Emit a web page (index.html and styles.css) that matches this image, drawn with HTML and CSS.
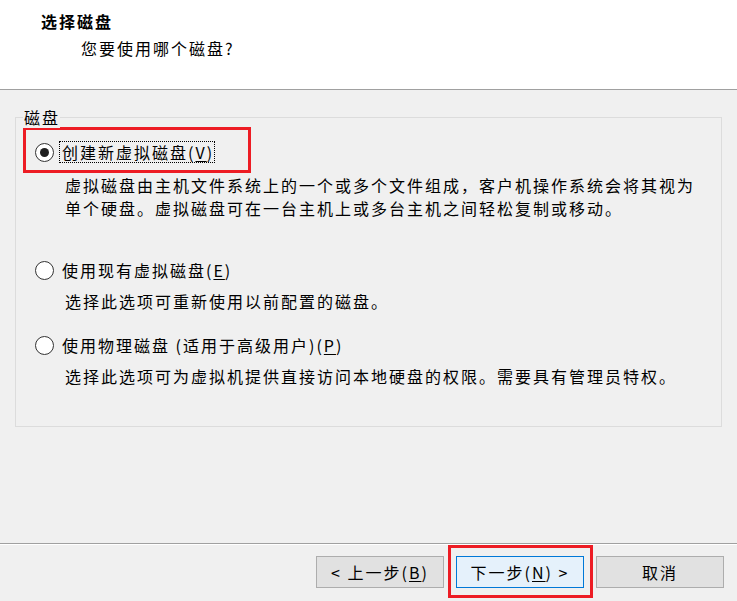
FILE: index.html
```html
<!DOCTYPE html>
<html lang="zh-CN">
<head>
<meta charset="utf-8">
<title>选择磁盘</title>
<link rel="stylesheet" href="styles.css">
</head>
<body>
<div class="dialog">
  <header class="header">
    <div class="title">选择磁盘</div>
    <div class="subtitle">您要使用哪个磁盘?</div>
  </header>
  <main class="main">
    <section class="group">
      <span class="legend">磁盘</span>
      <div class="highlight">
        <div class="option">
          <span class="radio checked"></span>
          <span class="label focused">创建新虚拟磁盘(<u>V</u>)</span>
        </div>
      </div>
      <p class="desc desc-1">虚拟磁盘由主机文件系统上的一个或多个文件组成，客户机操作系统会将其视为<br>单个硬盘。虚拟磁盘可在一台主机上或多台主机之间轻松复制或移动。</p>
      <div class="option option-2">
        <span class="radio"></span>
        <span class="label">使用现有虚拟磁盘(<u>E</u>)</span>
      </div>
      <p class="desc desc-2">选择此选项可重新使用以前配置的磁盘。</p>
      <div class="option option-3">
        <span class="radio"></span>
        <span class="label">使用物理磁盘 (适用于高级用户)(<u>P</u>)</span>
      </div>
      <p class="desc desc-3">选择此选项可为虚拟机提供直接访问本地硬盘的权限。需要具有管理员特权。</p>
    </section>
  </main>
  <footer class="footer">
    <button class="btn btn-back">&lt; 上一步(<u>B</u>)</button>
    <div class="highlight-btn">
      <button class="btn btn-next">下一步(<u>N</u>) &gt;</button>
    </div>
    <button class="btn btn-cancel">取消</button>
  </footer>
</div>
</body>
</html>
```
FILE: styles.css
```css
* {
  box-sizing: border-box;
  margin: 0;
  padding: 0;
}

html, body {
  width: 737px;
  height: 601px;
  overflow: hidden;
}

body {
  background: #f0f0f0;
  font-family: "Noto Sans CJK SC", "Noto Sans", sans-serif;
  font-size: 16px;
  letter-spacing: 2px;
  color: #000;
}

.dialog {
  display: flex;
  flex-direction: column;
  height: 601px;
}

.header {
  height: 90px;
  flex: none;
  background: #fff;
  border-bottom: 1px solid #a0a0a0;
  padding-top: 10px;
}

.title {
  font-weight: bold;
  line-height: 22px;
  padding-left: 41px;
}

.subtitle {
  line-height: 22px;
  margin-top: 5px;
  padding-left: 81px;
}

.main {
  flex: 1;
  padding: 27px 15px 0 15px;
}

.group {
  position: relative;
  height: 310px;
  border: 1px solid #dcdcdc;
}

.legend {
  position: absolute;
  top: -12px;
  left: 7px;
  padding: 0 0 0 1px;
  line-height: 22px;
  background: #f0f0f0;
}

.highlight {
  width: 228px;
  height: 46px;
  margin: 9px 0 0 7px;
  border: 3px solid #ed1c24;
  padding: 11px 0 0 9px;
}

.option {
  display: flex;
  align-items: center;
  height: 22px;
}

.radio {
  flex: none;
  width: 19px;
  height: 19px;
  border-radius: 50%;
  border: 1px solid #333;
  background: #fff;
  margin-right: 6px;
  display: grid;
  place-items: center;
}

.radio.checked::after {
  content: "";
  width: 9px;
  height: 9px;
  border-radius: 50%;
  background: #1f1f1f;
}

.label {
  line-height: 20px;
  padding: 0 0 0 2px;
}

.label.focused {
  outline: 1px dotted #000;
}

.desc {
  margin-left: 49px;
  line-height: 23px;
}

.desc-1 { margin-top: 1px; }
.option-2 { margin: 39px 0 0 19px; }
.desc-2 { margin-top: 9px; }
.option-3 { margin: 21px 0 0 19px; }
.desc-3 { margin-top: 9px; }

.footer {
  height: 58px;
  flex: none;
  border-top: 1px solid #a0a0a0;
  box-shadow: inset 0 1px 0 #fff;
  padding: 1px 13px 0 0;
  display: flex;
  justify-content: flex-end;
  align-items: flex-start;
}

.btn {
  width: 128px;
  height: 32px;
  background: #e1e1e1;
  border: 1px solid #adadad;
  font: inherit;
  letter-spacing: inherit;
  color: #000;
  line-height: 20px;
}

.btn-back,
.btn-cancel {
  margin-top: 11px;
}

.btn-cancel {
  margin-left: 3px;
}

.highlight-btn {
  margin-left: 4px;
  border: 3px solid #ed1c24;
  padding: 8px 6px 7px 5px;
}

.btn-next {
  display: block;
  background: #e5f1fb;
  border-color: #0078d7;
}

u {
  text-underline-offset: 2px;
}
```
